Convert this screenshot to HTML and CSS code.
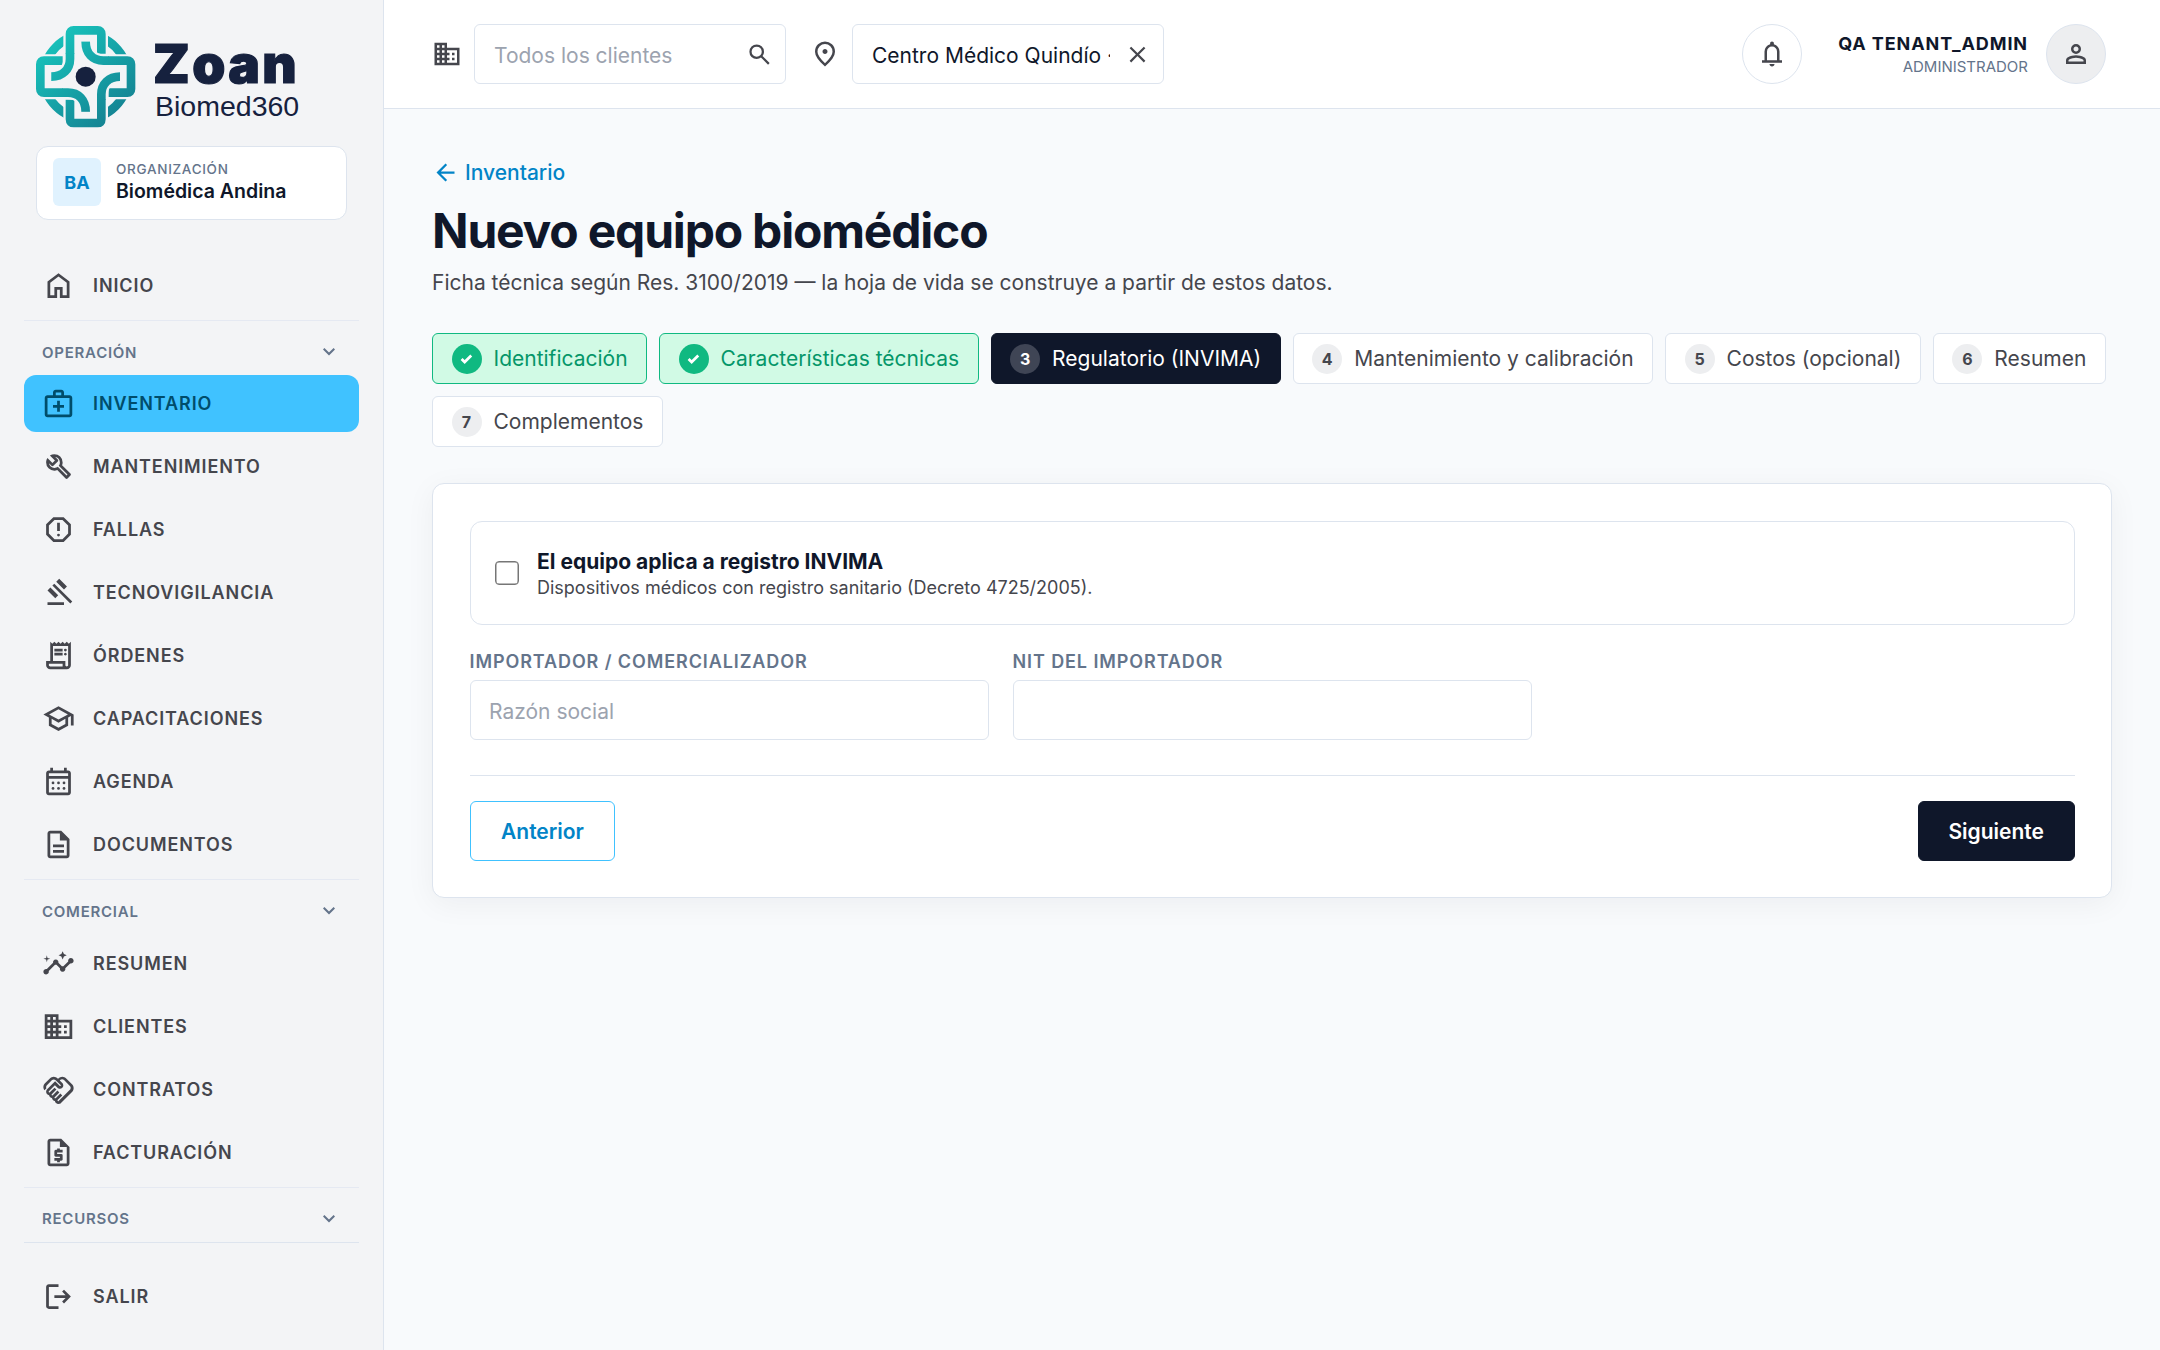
FILE: index.html
```html
<!DOCTYPE html>
<html lang="es">
<head>
    <meta charset="UTF-8">
    <meta name="viewport" content="width=device-width, initial-scale=1.0">
    <title>Nuevo equipo biomédico</title>
    <link rel="stylesheet" href="styles.css">
</head>
<body>
    <!-- Iconos -->
    <svg class="sprite" xmlns="http://www.w3.org/2000/svg">
        <symbol id="i-home" viewBox="0 -960 960 960"><path d="M240-200h120v-240h240v240h120v-360L480-740 240-560v360Zm-80 80v-480l320-240 320 240v480H520v-240h-80v240H160Z"/></symbol>
        <symbol id="i-medical" viewBox="0 0 24 24"><path d="M4 22q-.825 0-1.412-.587T2 20V8q0-.825.588-1.412T4 6h4V4q0-.825.588-1.412T10 2h4q.825 0 1.413.588T16 4v2h4q.825 0 1.413.588T22 8v12q0 .825-.587 1.413T20 22H4Zm0-2h16V8H4v12Zm6-14h4V4h-4v2Zm1 12v-3H8v-2h3v-3h2v3h3v2h-3v3h-2Z"/></symbol>
        <symbol id="i-build" viewBox="0 -960 960 960"><path d="M686-132 444-376q-20 8-40.5 12t-43.5 4q-100 0-170-70t-70-170q0-36 10-68.5t28-61.5l146 146 72-72-146-146q29-18 61.5-28t68.5-10q100 0 170 70t70 170q0 23-4 43.5T584-516l244 242q12 12 12 29t-12 29l-84 84q-12 12-29 12t-29-12Zm29-85 27-27-256-256q18-20 26-46.5t8-53.5q0-60-38.5-104.5T386-758l74 74q12 12 12 28t-12 28L332-500q-12 12-28 12t-28-12l-74-74q9 57 53.5 95.5T360-440q26 0 52-8t47-25l256 256Z"/></symbol>
        <symbol id="i-report" viewBox="0 -960 960 960"><path d="M480-280q17 0 28.5-11.5T520-320q0-17-11.5-28.5T480-360q-17 0-28.5 11.5T440-320q0 17 11.5 28.5T480-280Zm-40-160h80v-240h-80v240ZM330-120 120-330v-300l210-210h300l210 210v300L630-120H330Zm34-80h232l164-164v-232L596-760H364L200-596v232l164 164Z"/></symbol>
        <symbol id="i-gavel" viewBox="0 -960 960 960"><path d="M160-120v-80h480v80H160Zm226-194L160-540l84-86 228 226-86 86Zm254-254L414-796l86-84 226 226-86 86Zm184 408L302-682l56-56 522 522-56 56Z"/></symbol>
        <symbol id="i-receipt" viewBox="0 -960 960 960"><path d="M240-80q-50 0-85-35t-35-85v-120h120v-560l60 60 60-60 60 60 60-60 60 60 60-60 60 60 60-60 60 60 60-60v680q0 50-35 85t-85 35H240Zm480-80q17 0 28.5-11.5T760-200v-560H320v440h360v120q0 17 11.5 28.5T720-160ZM360-600v-80h240v80H360Zm0 120v-80h240v80H360Zm320-120q-17 0-28.5-11.5T640-640q0-17 11.5-28.5T680-680q17 0 28.5 11.5T720-640q0 17-11.5 28.5T680-600Zm0 120q-17 0-28.5-11.5T640-520q0-17 11.5-28.5T680-560q17 0 28.5 11.5T720-520q0 17-11.5 28.5T680-480ZM240-160h360v-80H200v40q0 17 11.5 28.5T240-160Z"/></symbol>
        <symbol id="i-school" viewBox="0 -960 960 960"><path d="M480-120 200-272v-240L40-600l440-240 440 240v320h-80v-276l-80 44v240L480-120Zm0-332 274-148-274-148-274 148 274 148Zm0 241 200-108v-151L480-360 280-470v151l200 108Z"/></symbol>
        <symbol id="i-calendar" viewBox="0 -960 960 960"><path d="M200-80q-33 0-56.5-23.5T120-160v-560q0-33 23.5-56.5T200-800h40v-80h80v80h320v-80h80v80h40q33 0 56.5 23.5T840-720v560q0 33-23.5 56.5T760-80H200Zm0-80h560v-400H200v400Zm0-480h560v-80H200v80Z"/><circle cx="320" cy="-440" r="40"/><circle cx="480" cy="-440" r="40"/><circle cx="640" cy="-440" r="40"/><circle cx="320" cy="-280" r="40"/><circle cx="480" cy="-280" r="40"/><circle cx="640" cy="-280" r="40"/></symbol>
        <symbol id="i-description" viewBox="0 -960 960 960"><path d="M320-240h320v-80H320v80Zm0-160h320v-80H320v80ZM240-80q-33 0-56.5-23.5T160-160v-640q0-33 23.5-56.5T240-880h320l240 240v480q0 33-23.5 56.5T720-80H240Zm280-520v-200H240v640h480v-440H520Z"/></symbol>
        <symbol id="i-insights" viewBox="0 0 24 24"><path d="M21 8c-1.45 0-2.26 1.44-1.93 2.51l-3.55 3.56c-.3-.09-.74-.09-1.04 0l-2.55-2.55C12.27 10.45 11.46 9 10 9c-1.45 0-2.27 1.44-1.93 2.52l-4.56 4.55C2.44 15.74 1 16.55 1 18c0 1.1.9 2 2 2 1.45 0 2.26-1.44 1.93-2.51l4.55-4.56c.3.09.74.09 1.04 0l2.55 2.55C12.73 16.55 13.54 18 15 18c1.45 0 2.27-1.44 1.93-2.52l3.56-3.55C21.56 12.26 23 11.45 23 10c0-1.1-.9-2-2-2zM15 9l.94-2.07L18 6l-2.06-.93L15 3l-.92 2.07L12 6l2.08.93L15 9zM3.5 11L4 9l2-.5L4 8l-.5-2L3 8l-2 .5L3 9l.5 2z"/></symbol>
        <symbol id="i-domain" viewBox="0 -960 960 960"><path d="M80-120v-720h400v160h400v560H80Zm80-80h80v-80h-80v80Zm0-160h80v-80h-80v80Zm0-160h80v-80h-80v80Zm0-160h80v-80h-80v80Zm160 480h80v-80h-80v80Zm0-160h80v-80h-80v80Zm0-160h80v-80h-80v80Zm0-160h80v-80h-80v80Zm160 480h320v-400H480v80h80v80h-80v80h80v80h-80v80Zm160-240v-80h80v80h-80Zm0 160v-80h80v80h-80Z"/></symbol>
        <symbol id="i-handshake" viewBox="0 -960 960 960"><path d="M475-140q2 0 4-1t4-2l328-328q12-12 17.5-27t5.5-30q0-16-5.5-30.5T811-584L641-754q-11-12-25.5-17.5T585-777q-15 0-30 5.5T528-754l-11 11 74 75q15 14 22 32t7 38q0 42-28.5 70.5T521-499q-20 0-38.5-7T450-528l-75-74-175 175q-3 3-4.5 6.5T194-413q0 8 6 14.5t14 6.5q4 0 8-2t6-4l136-136 56 56-135 136q-3 3-4.5 6.5T279-328q0 8 6 14t14 6q4 0 8-2t6-4l136-135 56 56-135 136q-3 2-4.5 6t-1.5 8q0 8 6 14t14 6q4 0 7.5-1.5t6.5-4.5l136-135 56 56-136 136q-3 3-4.5 6.5T455-159q0 8 6.5 13.5T475-140Zm-1 80q-37 0-65.5-24.5T375-146q-34-5-57-28t-28-57q-34-5-56.5-28.5T206-316q-38-5-62-33t-24-66q0-20 7.5-38.5T149-486l232-231 131 131q2 3 6 4.5t8 1.5q9 0 15-5.5t6-14.5q0-4-1.5-8t-4.5-6L398-748q-11-12-25.5-17.5T342-771q-15 0-30 5.5T285-748L144-606q-9 9-15 21t-8 24q-2 12 0 24.5t8 23.5l-58 58q-17-23-25-50.5T40-561q2-28 14-54.5T87-662l141-141q24-23 53.5-35.5T342-851q31 0 60.5 12.5T455-803l11 11 11-11q24-23 53.5-35.5T591-851q31 0 60.5 12.5T704-803l169 169q23 23 35 53t12 61q0 31-12 60.5T873-407L545-80q-14 14-32.5 17T474-60Z"/></symbol>
        <symbol id="i-quote" viewBox="0 -960 960 960"><path d="M440-200h80v-40h40q17 0 28.5-11.5T600-280v-120q0-17-11.5-28.5T560-440H440v-40h160v-80h-80v-40h-80v40h-40q-17 0-28.5 11.5T360-520v120q0 17 11.5 28.5T400-360h120v40H360v80h80v40ZM240-80q-33 0-56.5-23.5T160-160v-640q0-33 23.5-56.5T240-880h320l240 240v480q0 33-23.5 56.5T720-80H240Zm280-560v-160H240v640h480v-480H520Z"/></symbol>
        <symbol id="i-logout" viewBox="0 -960 960 960"><path d="M200-120q-33 0-56.5-23.5T120-200v-560q0-33 23.5-56.5T200-840h280v80H200v560h280v80H200Zm440-160-55-58 102-102H360v-80h327L585-622l55-58 200 200-200 200Z"/></symbol>
        <symbol id="i-expand" viewBox="0 -960 960 960"><path d="M480-345 240-585l56-56 184 184 184-184 56 56-240 240Z"/></symbol>
        <symbol id="i-search" viewBox="0 -960 960 960"><path d="M784-120 532-372q-30 24-69 38t-83 14q-109 0-184.5-75.5T120-580q0-109 75.5-184.5T380-840q109 0 184.5 75.5T640-580q0 44-14 83t-38 69l252 252-56 56ZM380-400q75 0 127.5-52.5T560-580q0-75-52.5-127.5T380-760q-75 0-127.5 52.5T200-580q0 75 52.5 127.5T380-400Z"/></symbol>
        <symbol id="i-location" viewBox="0 -960 960 960"><path d="M480-480q33 0 56.5-23.5T560-560q0-33-23.5-56.5T480-640q-33 0-56.5 23.5T400-560q0 33 23.5 56.5T480-480Zm0 294q122-112 181-203.5T720-552q0-109-69.5-178.5T480-800q-101 0-170.5 69.5T240-552q0 71 59 162.5T480-186Zm0 106Q319-217 239.5-334.5T160-552q0-150 96.5-239T480-880q127 0 223.5 89T800-552q0 100-79.5 217.5T480-80Z"/></symbol>
        <symbol id="i-close" viewBox="0 -960 960 960"><path d="m256-200-56-56 224-224-224-224 56-56 224 224 224-224 56 56-224 224 224 224-56 56-224-224-224 224Z"/></symbol>
        <symbol id="i-bell" viewBox="0 -960 960 960"><path d="M160-200v-80h80v-280q0-83 50-147.5T420-792v-28q0-25 17.5-42.5T480-880q25 0 42.5 17.5T540-820v28q80 20 130 84.5T720-560v280h80v80H160ZM480-80q-33 0-56.5-23.5T400-160h160q0 33-23.5 56.5T480-80ZM320-280h320v-280q0-66-47-113t-113-47q-66 0-113 47t-47 113v280Z"/></symbol>
        <symbol id="i-person" viewBox="0 -960 960 960"><path d="M480-480q-66 0-113-47t-47-113q0-66 47-113t113-47q66 0 113 47t47 113q0 66-47 113t-113 47ZM160-160v-112q0-34 17.5-62.5T224-378q62-31 126-46.5T480-440q66 0 130 15.5T736-378q29 15 46.5 43.5T800-272v112H160Zm80-80h480v-32q0-11-5.5-20T700-306q-54-27-109-40.5T480-360q-56 0-111 13.5T260-306q-9 5-14.5 14t-5.5 20v32Zm240-320q33 0 56.5-23.5T560-640q0-33-23.5-56.5T480-720q-33 0-56.5 23.5T400-640q0 33 23.5 56.5T480-560Z"/></symbol>
        <symbol id="i-back" viewBox="0 -960 960 960"><path d="m313-440 224 224-57 56-320-320 320-320 57 56-224 224h487v80H313Z"/></symbol>
        <symbol id="i-check" viewBox="0 0 24 24"><path d="M5.8 12.6l3.9 3.9L18 8.2" fill="none" stroke="currentColor" stroke-width="3.4"/></symbol>
    </svg>

    <div class="app">
        <aside class="sidebar">
            <div class="brand">
                <svg class="brand-mark" viewBox="105 75 306 312">
                    <defs>
                        <linearGradient id="teal" gradientUnits="userSpaceOnUse" x1="150" y1="100" x2="370" y2="360">
                            <stop offset="0" stop-color="#18c5bd"/>
                            <stop offset="1" stop-color="#147f90"/>
                        </linearGradient>
                    </defs>
                    <circle class="ring" cx="257" cy="230" r="126"/>
                    <path class="gap" d="M190 70h134v320H190zM100 163h315v135H100z"/>
                    <g class="strand">
                        <path d="M257 125C257 160 278 182 310 182H382Q393 182 393 193V267Q393 278 382 278H326"/>
                        <path d="M360 230C326 230 304 252 304 283V358Q304 369 293 369H221Q210 369 210 358V299"/>
                        <path d="M257 335C257 300 236 278 204 278H132Q121 278 121 267V193Q121 182 132 182H188"/>
                        <path d="M154 230C188 230 210 208 210 177V102Q210 91 221 91H293Q304 91 304 102V161"/>
                    </g>
                    <g class="halo">
                        <path d="M257 125C257 160 278 182 310 182H325"/>
                        <path d="M360 230C326 230 304 252 304 283V298"/>
                        <path d="M257 335C257 300 236 278 204 278H189"/>
                        <path d="M154 230C188 230 210 208 210 177V162"/>
                    </g>
                    <g class="strand">
                        <path d="M257 125C257 160 278 182 310 182H327"/>
                        <path d="M360 230C326 230 304 252 304 283V300"/>
                        <path d="M257 335C257 300 236 278 204 278H187"/>
                        <path d="M154 230C188 230 210 208 210 177V160"/>
                    </g>
                    <circle class="core" cx="257" cy="230" r="30"/>
                </svg>
                <div class="brand-text">
                    <span class="brand-name">Zoan</span>
                    <span class="brand-sub">Biomed360</span>
                </div>
            </div>

            <div class="org">
                <span class="org-badge">BA</span>
                <div class="org-text">
                    <span class="org-label">ORGANIZACIÓN</span>
                    <span class="org-name">Biomédica Andina</span>
                </div>
            </div>

            <nav class="nav">
                <a class="nav-item"><svg class="icon"><use href="#i-home"/></svg>INICIO</a>

                <div class="nav-group">
                    <div class="nav-head">OPERACIÓN<svg class="chevron"><use href="#i-expand"/></svg></div>
                    <a class="nav-item active"><svg class="icon"><use href="#i-medical"/></svg>INVENTARIO</a>
                    <a class="nav-item"><svg class="icon"><use href="#i-build"/></svg>MANTENIMIENTO</a>
                    <a class="nav-item"><svg class="icon"><use href="#i-report"/></svg>FALLAS</a>
                    <a class="nav-item"><svg class="icon"><use href="#i-gavel"/></svg>TECNOVIGILANCIA</a>
                    <a class="nav-item"><svg class="icon"><use href="#i-receipt"/></svg>ÓRDENES</a>
                    <a class="nav-item"><svg class="icon"><use href="#i-school"/></svg>CAPACITACIONES</a>
                    <a class="nav-item"><svg class="icon"><use href="#i-calendar"/></svg>AGENDA</a>
                    <a class="nav-item"><svg class="icon"><use href="#i-description"/></svg>DOCUMENTOS</a>
                </div>

                <div class="nav-group">
                    <div class="nav-head">COMERCIAL<svg class="chevron"><use href="#i-expand"/></svg></div>
                    <a class="nav-item"><svg class="icon"><use href="#i-insights"/></svg>RESUMEN</a>
                    <a class="nav-item"><svg class="icon"><use href="#i-domain"/></svg>CLIENTES</a>
                    <a class="nav-item"><svg class="icon"><use href="#i-handshake"/></svg>CONTRATOS</a>
                    <a class="nav-item"><svg class="icon"><use href="#i-quote"/></svg>FACTURACIÓN</a>
                </div>

                <div class="nav-group">
                    <div class="nav-head">RECURSOS<svg class="chevron"><use href="#i-expand"/></svg></div>
                </div>
            </nav>

            <div class="sidebar-foot">
                <a class="nav-item"><svg class="icon"><use href="#i-logout"/></svg>SALIR</a>
            </div>
        </aside>

        <div class="page">
            <header class="topbar">
                <div class="filter">
                    <svg class="icon-md"><use href="#i-domain"/></svg>
                    <div class="combo">
                        <input type="text" placeholder="Todos los clientes">
                        <svg class="icon-sm"><use href="#i-search"/></svg>
                    </div>
                </div>
                <div class="filter">
                    <svg class="icon-md"><use href="#i-location"/></svg>
                    <div class="combo">
                        <input type="text" value="Centro Médico Quindío ·">
                        <svg class="icon-sm"><use href="#i-close"/></svg>
                    </div>
                </div>
                <div class="user">
                    <button class="round"><svg class="icon-md"><use href="#i-bell"/></svg></button>
                    <div class="user-text">
                        <span class="user-name">QA TENANT_ADMIN</span>
                        <span class="user-role">ADMINISTRADOR</span>
                    </div>
                    <span class="round avatar"><svg class="icon-md"><use href="#i-person"/></svg></span>
                </div>
            </header>

            <main class="content">
                <a class="back"><svg class="icon-sm"><use href="#i-back"/></svg>Inventario</a>
                <h1>Nuevo equipo biomédico</h1>
                <p class="subtitle">Ficha técnica según Res. 3100/2019 — la hoja de vida se construye a partir de estos datos.</p>

                <div class="steps">
                    <div class="step done"><span class="num"><svg><use href="#i-check"/></svg></span>Identificación</div>
                    <div class="step done"><span class="num"><svg><use href="#i-check"/></svg></span>Características técnicas</div>
                    <div class="step current"><span class="num">3</span>Regulatorio (INVIMA)</div>
                    <div class="step"><span class="num">4</span>Mantenimiento y calibración</div>
                    <div class="step"><span class="num">5</span>Costos (opcional)</div>
                    <div class="step"><span class="num">6</span>Resumen</div>
                    <div class="step"><span class="num">7</span>Complementos</div>
                </div>

                <section class="card">
                    <label class="check-box">
                        <input type="checkbox">
                        <span class="check-text">
                            <strong>El equipo aplica a registro INVIMA</strong>
                            <small>Dispositivos médicos con registro sanitario (Decreto 4725/2005).</small>
                        </span>
                    </label>

                    <div class="fields">
                        <div class="field">
                            <label for="importador">IMPORTADOR / COMERCIALIZADOR</label>
                            <input type="text" id="importador" placeholder="Razón social">
                        </div>
                        <div class="field">
                            <label for="nit">NIT DEL IMPORTADOR</label>
                            <input type="text" id="nit">
                        </div>
                    </div>

                    <div class="actions">
                        <button class="btn btn-outline">Anterior</button>
                        <button class="btn btn-dark">Siguiente</button>
                    </div>
                </section>
            </main>
        </div>
    </div>
</body>
</html>
```
FILE: styles.css
```css
* {
    box-sizing: border-box;
}
body {
    margin: 0;
    font-family: Inter, "Liberation Sans", sans-serif;
    font-size: 21px;
    color: #45464d;
    background-color: #f8fafc;
}
input, button {
    font-family: inherit;
    font-size: 21px;
}
svg {
    fill: currentColor;
    flex-shrink: 0;
}
.sprite {
    display: none;
}
.app {
    display: flex;
    height: 100vh;
    overflow: hidden;
}

/* Barra lateral */
.sidebar {
    width: 384px;
    flex-shrink: 0;
    padding: 24px 24px 0;
    background-color: #f3f4f6;
    border-right: 1px solid #dde4ee;
}
.brand {
    display: flex;
    gap: 16px;
    height: 106px;
    padding-left: 11px;
    color: #16213e;
}
.brand-mark {
    width: 102px;
    height: 104px;
    margin-top: 1px;
}
.ring {
    fill: none;
    stroke: url(#teal);
    stroke-width: 26;
}
.gap {
    fill: #f3f4f6;
}
.strand {
    fill: none;
    stroke: url(#teal);
    stroke-width: 26;
}
.halo {
    fill: none;
    stroke: #f3f4f6;
    stroke-width: 40;
}
.core {
    fill: #16213e;
}
.brand-text {
    display: flex;
    flex-direction: column;
}
.brand-name {
    margin-top: 15px;
    font-size: 53px;
    font-weight: 900;
    line-height: 50px;
    letter-spacing: 2.4px;
    -webkit-text-stroke: 1.2px #16213e;
}
.brand-sub {
    margin-top: 2px;
    padding-left: 2px;
    font-family: "Liberation Sans", Arial, sans-serif;
    font-size: 28.5px;
    line-height: 30px;
}
.org {
    display: flex;
    align-items: center;
    gap: 15px;
    height: 74px;
    margin: 16px 12px 0;
    padding: 0 16px 2px;
    background-color: #fff;
    border: 1px solid #dde4ee;
    border-radius: 12px;
}
.org-badge {
    display: flex;
    align-items: center;
    justify-content: center;
    width: 48px;
    height: 48px;
    border-radius: 6px;
    background-color: #e0f2fe;
    color: #0284c7;
    font-size: 18px;
    font-weight: 700;
}
.org-text {
    display: flex;
    flex-direction: column;
}
.org-label {
    font-size: 13.5px;
    font-weight: 500;
    line-height: 18px;
    letter-spacing: 0.7px;
    color: #64748b;
}
.org-name {
    font-size: 19.5px;
    font-weight: 600;
    line-height: 26px;
    color: #0f172a;
}
.nav {
    margin-top: 37px;
}
.nav-item {
    display: flex;
    align-items: center;
    gap: 18px;
    height: 57px;
    margin-bottom: 6px;
    padding-left: 18px;
    border-radius: 12px;
    font-size: 18px;
    font-weight: 600;
    letter-spacing: 0.9px;
}
.nav-item.active {
    background-color: #40c2ff;
    color: #004d6b;
}
.icon {
    width: 33px;
    height: 33px;
}
.icon-md {
    width: 30px;
    height: 30px;
}
.icon-sm {
    width: 27px;
    height: 27px;
}
.nav-group {
    padding-top: 10px;
    border-top: 1px solid #e5e9f2;
}
.nav-head {
    display: flex;
    align-items: center;
    justify-content: space-between;
    height: 42px;
    margin-bottom: 2.3px;
    padding: 0 18.5px 0 18px;
    font-size: 15px;
    font-weight: 600;
    letter-spacing: 0.75px;
    color: #64748b;
}
.chevron {
    width: 24px;
    height: 24px;
}
.sidebar-foot {
    margin-top: 2.5px;
    padding-top: 25px;
    border-top: 1px solid #dde4ee;
}

/* Cabecera */
.page {
    flex: 1;
    min-width: 0;
}
.topbar {
    display: flex;
    align-items: center;
    height: 109px;
    padding: 0 54px 0 48px;
    background-color: #fff;
    border-bottom: 1px solid #dde4ee;
}
.filter {
    display: flex;
    align-items: center;
    gap: 12px;
    margin-right: 24px;
}
.combo {
    display: flex;
    align-items: center;
    justify-content: space-between;
    width: 312px;
    height: 60px;
    padding: 0 12px 0 19px;
    border: 1px solid #dde4ee;
    border-radius: 6px;
}
.combo input {
    width: 238px;
    padding: 2px 0 0;
    border: none;
    outline: none;
    background: none;
    color: #0f172a;
}
input::placeholder {
    color: #9ca3af;
}
.user {
    display: flex;
    align-items: center;
    margin-left: auto;
}
.round {
    display: flex;
    align-items: center;
    justify-content: center;
    width: 60px;
    height: 60px;
    padding: 0;
    border: 1px solid #dde4ee;
    border-radius: 50%;
    background-color: #fff;
    color: #45464d;
}
.avatar {
    background-color: #edeef0;
}
.user-text {
    display: flex;
    flex-direction: column;
    align-items: flex-end;
    margin: 0 18px 0 36px;
    padding-top: 2px;
}
.user-name {
    font-size: 18px;
    font-weight: 700;
    line-height: 24px;
    letter-spacing: 0.9px;
    color: #0f172a;
}
.user-role {
    font-size: 15px;
    line-height: 22px;
    color: #64748b;
}

/* Contenido */
.content {
    padding: 48px;
}
.back {
    display: flex;
    align-items: center;
    gap: 6px;
    height: 31px;
    color: #0284c7;
    font-weight: 500;
}
h1 {
    margin: 12px 0 0;
    font-size: 48px;
    font-weight: 700;
    line-height: 62px;
    letter-spacing: -1.2px;
    color: #0f172a;
}
.subtitle {
    margin: 6px 0 0;
    line-height: 30px;
}
.steps {
    display: flex;
    flex-wrap: wrap;
    gap: 12px;
    margin-top: 35px;
}
.step {
    display: flex;
    align-items: center;
    gap: 12px;
    height: 51px;
    padding: 0 18.5px;
    border: 1px solid #dde4ee;
    border-radius: 6px;
    background-color: #fff;
}
.num {
    display: flex;
    align-items: center;
    justify-content: center;
    width: 30px;
    height: 30px;
    border-radius: 50%;
    background-color: #edeef0;
    font-size: 16px;
    font-weight: 700;
}
.num svg {
    width: 19px;
    height: 19px;
}
.step.done {
    background-color: #d1fae5;
    border-color: #10b981;
    color: #059669;
}
.step.done .num {
    background-color: #10b981;
    color: #fff;
}
.step.current {
    background-color: #0f172a;
    border-color: #0f172a;
    color: #fff;
}
.step.current .num {
    background-color: #3f4555;
}
.card {
    margin-top: 36px;
    padding: 36.5px;
    background-color: #fff;
    border: 1px solid #dde4ee;
    border-radius: 12px;
    box-shadow: 0 6px 30px rgba(15, 23, 42, 0.05);
}
.check-box {
    display: flex;
    align-items: center;
    gap: 18px;
    height: 104.5px;
    padding: 0 24.5px;
    border: 1px solid #dde4ee;
    border-radius: 12px;
}
.check-box input {
    appearance: none;
    width: 24px;
    height: 24px;
    margin: 0;
    border: 1px solid #767676;
    border-radius: 4px;
    box-shadow: inset 0 0 0 0.5px #767676;
}
.check-text {
    display: flex;
    flex-direction: column;
    padding-top: 4px;
}
.check-text strong {
    line-height: 26px;
    font-weight: 700;
    color: #0f172a;
}
.check-text small {
    font-size: 18px;
    line-height: 26px;
}
.fields {
    display: grid;
    grid-template-columns: repeat(3, 1fr);
    gap: 24px;
    margin-top: 25px;
}
.field {
    display: flex;
    flex-direction: column;
    gap: 6px;
}
.field label {
    font-size: 18px;
    font-weight: 600;
    line-height: 24px;
    letter-spacing: 0.9px;
    color: #64748b;
}
.field input {
    height: 60px;
    padding: 2px 18.5px 0;
    border: 1px solid #dde4ee;
    border-radius: 6px;
    background-color: #fff;
}
.actions {
    display: flex;
    justify-content: space-between;
    margin-top: 35px;
    padding-top: 24.5px;
    border-top: 1px solid #dde4ee;
}
.btn {
    height: 60px;
    padding: 1px 29.5px 0;
    border: 1px solid #0f172a;
    border-radius: 6px;
    font-weight: 600;
}
.btn-outline {
    padding: 1px 30.5px 0;
    background-color: #fff;
    border-color: #40c2ff;
    color: #0284c7;
}
.btn-dark {
    background-color: #0f172a;
    color: #fff;
}
```
